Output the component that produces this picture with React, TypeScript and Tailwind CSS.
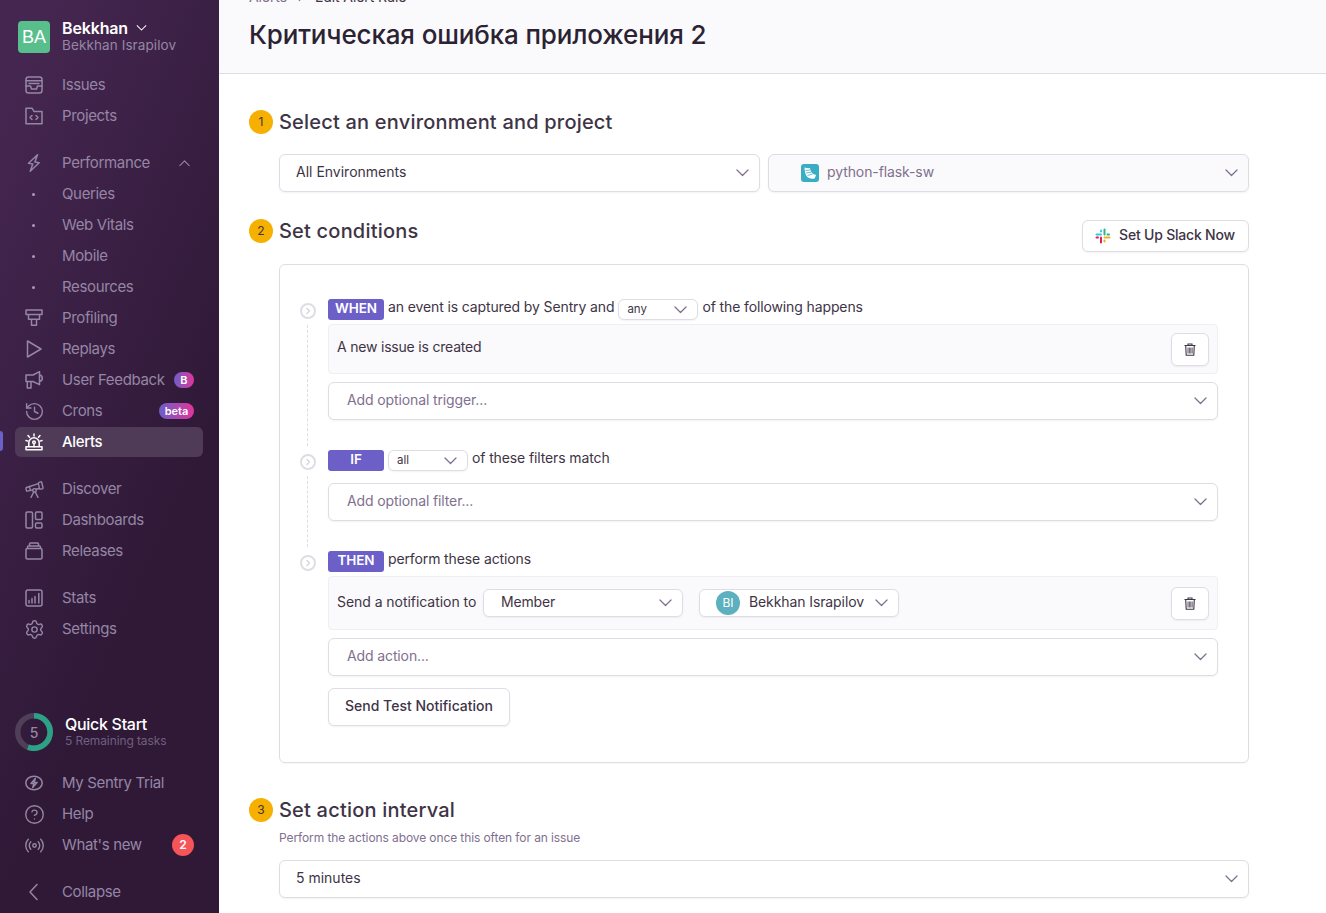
import React from "react";
import { History, Settings, CircleHelp, Radio, Telescope } from "lucide-react";

const S = ({ children }: { children: React.ReactNode }) => (
  <svg width="18" height="18" viewBox="0 0 18 18" fill="none" stroke="currentColor" strokeWidth="1.5" strokeLinecap="round" strokeLinejoin="round" className="shrink-0">
    {children}
  </svg>
);

const Chevron = ({ up, className }: { up?: boolean; className?: string }) => (
  <svg width="13" height="8" viewBox="0 0 13 8" fill="none" stroke="currentColor" strokeWidth="1.3" strokeLinecap="round" strokeLinejoin="round" className={className}>
    <path d={up ? "M1 7l5.5-5.5L12 7" : "M1 1l5.5 5.5L12 1"} />
  </svg>
);

const icons: Record<string, React.ReactNode> = {
  issues: (
    <S>
      <rect x="1" y="1" width="16" height="16" rx="2.5" />
      <path d="M1 4.8h16M1 10h4.5l1 3h5l1-3H17M4 7.4h10" />
    </S>
  ),
  projects: (
    <S>
      <path d="M1 16.800V1.200h6l2 3.200h8v12.400z" />
      <path d="M7 8.500L5 10.500l2 2M11 8.500l2 2-2 2" />
    </S>
  ),
  performance: (
    <S>
      <path d="M12.500 0.800L3.500 9.300l4.300.8-2.600 7.100 9-8.500-4.300-.8z" />
    </S>
  ),
  profiling: (
    <S>
      <path d="M1 1h16v4.600H1zM3.500 5.600h11v4.600h-11zM6.500 10.200h5v6h-5z" />
    </S>
  ),
  replays: (
    <S>
      <path d="M2.500 1L16 9 2.500 17z" />
    </S>
  ),
  feedback: (
    <S>
      <path d="M1 4h7l6.500-3.300v13L8 10.500H1zM14.500 4c2 .2 2.800 1.300 2.800 3.200s-.8 3-2.800 3.200M2.300 10.500V17H6v-6.500" />
    </S>
  ),
  alerts: (
    <S>
      <path d="M1 16.800h16v-3H1zM3.800 13.800V10a5.200 5.200 0 0 1 10.400 0v3.800" />
      <path d="M9 1v2M3 2.500l1.500 1.700M15 2.500l-1.500 1.700M1 7.500l2 .6M17 7.500l-2 .6" />
      <circle cx="9" cy="9.300" r="1.300" />
      <path d="M9 10.600v3.200" />
    </S>
  ),
  dashboards: (
    <S>
      <rect x="1" y="1" width="6.500" height="16" rx="1.200" />
      <rect x="10.500" y="1" width="6.500" height="7.500" rx="1.200" />
      <rect x="10.500" y="12" width="6.500" height="5" rx="1.200" />
    </S>
  ),
  releases: (
    <S>
      <rect x="1" y="6.500" width="16" height="10.500" rx="1.300" />
      <path d="M2.500 6.500V5a1 1 0 0 1 1-1h11a1 1 0 0 1 1 1v1.500M4.500 4V2a1 1 0 0 1 1-1h7a1 1 0 0 1 1 1v2" />
    </S>
  ),
  stats: (
    <S>
      <rect x="1" y="1" width="16" height="16" rx="2" />
      <path d="M4 14v-2.500M7 14V9.500M10 14V7.500M13.800 14V4.500" />
    </S>
  ),
  trial: (
    <S>
      <ellipse cx="9" cy="9" rx="8.200" ry="6.800" />
      <path d="M10.300 4.500L6 9.400h3l-1.300 4 4.300-5H9z" />
    </S>
  ),
  collapse: (
    <S>
      <path d="M12 1.500L5 9l7 7.500" />
    </S>
  ),
};

const lucide = (I: typeof History, size = 21) => <I size={size} strokeWidth={1.6} className="shrink-0" />;

function NavItem({ icon, label, dot, right, active }: { icon?: React.ReactNode; label: string; dot?: boolean; right?: React.ReactNode; active?: boolean }) {
  return (
    <div className={`relative mx-[15px] flex h-[30px] w-[188px] items-center rounded-md ${active ? "bg-[#4f3b58] text-white font-medium" : "text-[#9586a5]"}`}>
      {active && <div className="absolute left-[-15px] top-[4px] h-[20px] w-[3px] rounded-r-sm bg-[#6c5fc7]" />}
      <div className="ml-[10px] flex w-[18px] items-center justify-center">
        {dot ? <div className="mr-[1px] h-[3px] w-[3px] rounded-full bg-[#a99bb8]" /> : icon}
      </div>
      <span className="ml-[19px] flex-1 pb-[1px] text-[15px] leading-none tracking-[-0.35px]">{label}</span>
      {right}
    </div>
  );
}

const Grad = "bg-[linear-gradient(90deg,#6c5fc7,#e1359c)] text-white font-semibold";

function Sidebar() {
  return (
    <aside className="flex h-[913px] w-[219px] shrink-0 flex-col justify-between bg-[linear-gradient(294.17deg,#2f1937_35.57%,#452650_92.42%)] pb-[6px] pt-[21px]">
      <div>
        <div className="ml-[18px] flex h-[32px] items-center">
          <div className="flex h-[32px] w-[32px] items-center justify-center rounded-[4px] bg-[#57be8c] text-[18px] text-white" style={{ fontFamily: "'Liberation Sans', sans-serif" }}>
            BA
          </div>
          <div className="ml-[12px] flex flex-col pb-[2px]">
            <div className="flex items-center text-[16px] font-semibold leading-[17px] text-white tracking-[-0.15px]">
              Bekkhan
              <Chevron className="ml-[7px] scale-[0.8]" />
            </div>
            <div className="text-[13.5px] leading-[16px] tracking-[0.1px] text-[#9586a5]">Bekkhan Israpilov</div>
          </div>
        </div>
        <div className="mt-[17px] flex flex-col gap-px">
          <NavItem icon={icons.issues} label="Issues" />
          <NavItem icon={icons.projects} label="Projects" />
        </div>
        <div className="mt-[17px] flex flex-col gap-px">
          <NavItem icon={icons.performance} label="Performance" right={<Chevron up className="mr-[12px] scale-[0.85]" />} />
          <NavItem dot label="Queries" />
          <NavItem dot label="Web Vitals" />
          <NavItem dot label="Mobile" />
          <NavItem dot label="Resources" />
          <NavItem icon={icons.profiling} label="Profiling" />
          <NavItem icon={icons.replays} label="Replays" />
          <NavItem
            icon={icons.feedback}
            label="User Feedback"
            right={<span className={`mr-[9px] flex h-[16px] w-[20px] items-center justify-center rounded-full text-[11px] ${Grad}`}>B</span>}
          />
          <NavItem
            icon={lucide(History)}
            label="Crons"
            right={<span className={`mr-[9px] flex h-[16px] w-[35px] items-center justify-center rounded-full text-[11px] ${Grad}`}>beta</span>}
          />
          <NavItem active icon={icons.alerts} label="Alerts" />
        </div>
        <div className="mt-[17px] flex flex-col gap-px">
          <NavItem icon={lucide(Telescope)} label="Discover" />
          <NavItem icon={icons.dashboards} label="Dashboards" />
          <NavItem icon={icons.releases} label="Releases" />
        </div>
        <div className="mt-[17px] flex flex-col gap-px">
          <NavItem icon={icons.stats} label="Stats" />
          <NavItem icon={lucide(Settings)} label="Settings" />
        </div>
      </div>
      <div>
        <div className="ml-[15px] flex items-center">
          <div className="relative flex h-[38px] w-[38px] items-center justify-center text-[14px] font-medium text-[#9586a5]">
            <svg width="38" height="38" viewBox="0 0 38 38" fill="none" className="absolute inset-0">
              <circle cx="19" cy="19" r="16.250" stroke="#4f3f59" strokeWidth="5.500" />
              <path d="M19 2.750a16.250 16.250 0 1 1-6 31.400" stroke="#2ba185" strokeWidth="5.500" />
            </svg>
            5
          </div>
          <div className="ml-[12px] flex flex-col pb-[4px]">
            <div className="text-[16px] font-medium leading-[20px] text-white tracking-[-0.3px]">Quick Start</div>
            <div className="text-[12px] leading-[13px] tracking-[-0.1px] text-[#6f5f80]">5 Remaining tasks</div>
          </div>
        </div>
        <div className="mt-[17px] flex flex-col gap-px">
          <NavItem icon={icons.trial} label="My Sentry Trial" />
          <NavItem icon={lucide(CircleHelp)} label="Help" />
          <NavItem
            icon={lucide(Radio)}
            label="What's new"
            right={<span className="mr-[9px] flex h-[22px] w-[22px] items-center justify-center rounded-full bg-[#f55459] text-[12px] font-semibold text-white">2</span>}
          />
        </div>
        <div className="mt-[17px]">
          <NavItem icon={icons.collapse} label="Collapse" />
        </div>
      </div>
    </aside>
  );
}

const StepBadge = ({ n }: { n: number }) => (
  <div className="flex h-[24px] w-[24px] shrink-0 items-center justify-center rounded-full bg-[#f5b000] text-[12px] text-[#3e3446]">{n}</div>
);

const Heading = ({ n, title }: { n: number; title: string }) => (
  <div className="flex h-[24px] items-center">
    <StepBadge n={n} />
    <h2 className="ml-[6px] pb-[1px] text-[20px] font-medium leading-[24px] tracking-[0.2px] text-[#3e3446]">{title}</h2>
  </div>
);

function SelectBox({ children, className, muted }: { children: React.ReactNode; className?: string; muted?: boolean }) {
  return (
    <div className={`flex items-center justify-between rounded-md border border-[#e0dce5] shadow-[0_1px_2px_rgba(43,34,51,0.06)] ${muted ? "bg-[#faf9fb]" : "bg-white"} ${className ?? ""}`}>
      {children}
    </div>
  );
}

const BigSelect = ({ text, placeholder }: { text: string; placeholder?: boolean }) => (
  <SelectBox className={`h-[38px] w-full pr-[10px] ${placeholder ? "pl-[18px]" : "pl-[16px]"}`}>
    <span className={`pb-[3px] text-[14px] ${placeholder ? "tracking-[-0.12px] text-[#80708f]" : "text-[#3e3446]"}`}>{text}</span>
    <Chevron className="text-[#80708f]" />
  </SelectBox>
);

const Pill = ({ text }: { text: string }) => (
  <div className="flex h-[21px] w-[56px] shrink-0 items-center justify-center rounded-[3px] bg-[#6c5fc7] pb-[2px] text-[13.5px] font-semibold tracking-[-0.1px] text-white">{text}</div>
);

const TinySelect = ({ text }: { text: string }) => (
  <SelectBox className="h-[21px] w-[80px] shrink-0 pl-[8px] pr-[10px]">
    <span className="text-[11.5px] text-[#3e3446]">{text}</span>
    <Chevron className="text-[#80708f]" />
  </SelectBox>
);

function StepDot() {
  return (
    <div className="flex h-[16px] w-[16px] items-center justify-center rounded-full border-2 border-[#e0dce5] text-[#d5d0dc]">
      <svg width="6" height="8" viewBox="0 0 6 8" fill="none" stroke="currentColor" strokeWidth="1.1">
        <path d="M1.500 1l3 3-3 3" />
      </svg>
    </div>
  );
}

function Trash() {
  return (
    <div className="flex h-[33px] w-[38px] items-center justify-center rounded-md border border-[#e0dce5] bg-white shadow-[0_1px_2px_rgba(43,34,51,0.06)]">
      <svg width="12" height="13" viewBox="0 0 12 13" fill="none" stroke="#3e3446" strokeWidth="1.1">
        <path d="M0.500 2.500h11M4 2.500V1h4v1.500M1.700 2.500l.5 9.800h7.600l.5-9.800" />
        <path d="M4 4.500v6M5.400 4.500v6M6.800 4.500v6M8.200 4.500v6" strokeWidth="0.8" />
      </svg>
    </div>
  );
}

function Block({ line, children }: { line?: boolean; children: React.ReactNode }) {
  return (
    <div className="flex">
      <div className="flex w-[28px] shrink-0 flex-col pb-[4px] pt-[4px]">
        <StepDot />
        {line && <div className="ml-[7px] mt-[6px] flex-1 border-l border-dashed border-[#e0dce5]" />}
      </div>
      <div className="min-w-0 flex-1">{children}</div>
    </div>
  );
}

const Sentence = ({ children }: { children: React.ReactNode }) => <span className="pb-[6px] text-[14px] tracking-[-0.12px] text-[#3e3446]">{children}</span>;

const Panel = ({ children, h }: { children: React.ReactNode; h: string }) => (
  <div className={`flex items-start justify-between rounded-[4px] border border-[#f0eef3] bg-[#faf9fb] pl-[8px] pr-[8px] ${h}`}>{children}</div>
);

const Slack = () => (
  <svg width="16" height="16" viewBox="0 0 16 16" className="-ml-[1px]">
    <rect x="0.500" y="5.500" width="6.500" height="2" rx="1" fill="#36c5f0" />
    <rect x="5" y="1.500" width="2" height="3" rx="1" fill="#36c5f0" />
    <rect x="8.500" y="0.500" width="2" height="7" rx="1" fill="#2eb67d" />
    <rect x="11.500" y="5.500" width="3.500" height="2" rx="1" fill="#2eb67d" />
    <rect x="8.500" y="8.500" width="7" height="2" rx="1" fill="#ecb22e" />
    <rect x="8.500" y="11.500" width="2" height="3" rx="1" fill="#ecb22e" />
    <rect x="5" y="8.500" width="2" height="7" rx="1" fill="#e01e5a" />
    <rect x="0.500" y="8.500" width="3.500" height="2" rx="1" fill="#e01e5a" />
  </svg>
);

const Flask = () => (
  <svg width="18" height="18" viewBox="0 0 18 18">
    <rect width="18" height="18" rx="3" fill="#38adc4" />
    <path d="M3.500 3.500c2 .6 4 .8 5.500.6.200 2 1 4 2.500 5.400 1.200.9 2.500 1.300 3.500 1.300-.3 1.600-1 3-1.500 3.700-3 .6-6.400-.2-8-2.600C4 9.800 3.700 6.500 3.500 3.500z" fill="#fff" />
    <path d="M4.500 6.500l4.500-.5M5 9l5-.8M6.500 11.500l5-1.500" stroke="#38adc4" strokeWidth="0.8" />
  </svg>
);

export default function App() {
  return (
    <div className="flex h-[913px] w-[1326px] overflow-hidden bg-white" style={{ fontFamily: "Inter, 'Noto Sans', sans-serif" }}>
      <Sidebar />
      <main className="min-w-0 flex-1">
        <header className="h-[74px] overflow-hidden border-b border-[#e0dce5] bg-[#faf9fb] pl-[30px]">
          <div className="-mt-[14px] flex h-[20px] items-center text-[14px] tracking-[-0.1px] text-[#80708f]">
            <span>Alerts</span>
            <svg width="8" height="12" viewBox="0 0 8 12" fill="none" stroke="currentColor" strokeWidth="1.2" className="mx-[10px]">
              <path d="M2 1l4 5-4 5" />
            </svg>
            <span className="text-[#3e3446]">Edit Alert Rule</span>
          </div>
          <h1 className="mt-[13px] text-[26px] font-medium leading-[32px] tracking-[-0.14px] text-[#2b2233]">Критическая ошибка приложения 2</h1>
        </header>
        <div className="pl-[30px] pr-[77px] pt-[36px]">
          <Heading n={1} title="Select an environment and project" />
          <div className="ml-[30px] mt-[20px] grid grid-cols-2 gap-[8px]">
            <BigSelect text="All Environments" />
            <SelectBox muted className="h-[38px] pl-[32px] pr-[10px]">
              <span className="flex items-center gap-[8px] text-[14px] tracking-[-0.1px] text-[#80708f]">
                <Flask />
                <span className="pb-[4px]">python-flask-sw</span>
              </span>
              <Chevron className="text-[#80708f]" />
            </SelectBox>
          </div>

          <div className="mt-[27px] flex items-start justify-between">
            <Heading n={2} title="Set conditions" />
            <SelectBox className="mt-[1px] h-[32px] w-[167px] justify-center gap-[8px]">
              <Slack />
              <span className="pb-[3px] text-[14px] font-medium tracking-[-0.2px] text-[#3e3446]">Set Up Slack Now</span>
            </SelectBox>
          </div>

          <section className="ml-[30px] mt-[12px] h-[499px] rounded-md border border-[#e0dce5] pl-[20px] pr-[30px] pt-[34px] shadow-[0_1px_2px_rgba(43,34,51,0.04)]">
            <Block line>
              <div className="pb-[30px]">
                <div className="flex h-[21px] items-center gap-[4px]">
                  <Pill text="WHEN" />
                  <Sentence>an event is captured by Sentry and</Sentence>
                  <TinySelect text="any" />
                  <Sentence>of the following happens</Sentence>
                </div>
                <div className="mt-[4px]">
                  <Panel h="h-[50px]">
                    <span className="mt-[11px] text-[14px] tracking-[-0.2px] text-[#3e3446]">A new issue is created</span>
                    <div className="mt-[8px]">
                      <Trash />
                    </div>
                  </Panel>
                </div>
                <div className="mt-[8px]">
                  <BigSelect text="Add optional trigger..." placeholder />
                </div>
              </div>
            </Block>
            <Block line>
              <div className="pb-[30px]">
                <div className="flex h-[21px] items-center gap-[4px]">
                  <Pill text="IF" />
                  <TinySelect text="all" />
                  <Sentence>of these filters match</Sentence>
                </div>
                <div className="mt-[12px]">
                  <BigSelect text="Add optional filter..." placeholder />
                </div>
              </div>
            </Block>
            <Block>
              <div className="flex h-[21px] items-center gap-[4px]">
                <Pill text="THEN" />
                <Sentence>perform these actions</Sentence>
              </div>
              <div className="mt-[4px]">
                <Panel h="h-[54px]">
                  <div className="mt-[12px] flex items-center">
                    <span className="w-[146px] pb-[4px] text-[14px] tracking-[-0.05px] text-[#3e3446]">Send a notification to</span>
                    <SelectBox className="h-[28px] w-[200px] pl-[17px] pr-[10px]">
                      <span className="pb-[3px] text-[14px] tracking-[-0.15px] text-[#3e3446]">Member</span>
                      <Chevron className="text-[#80708f]" />
                    </SelectBox>
                    <SelectBox className="ml-[16px] h-[28px] w-[200px] pl-[16px] pr-[10px]">
                      <span className="flex items-center gap-[9px] text-[14px] tracking-[-0.1px] text-[#3e3446]">
                        <span className="flex h-[24px] w-[24px] items-center justify-center rounded-full bg-[#5cb0bf] text-[12px] text-white">BI</span>
                        <span className="pb-[3px]">Bekkhan Israpilov</span>
                      </span>
                      <Chevron className="text-[#80708f]" />
                    </SelectBox>
                  </div>
                  <div className="mt-[10px]">
                    <Trash />
                  </div>
                </Panel>
              </div>
              <div className="mt-[8px]">
                <BigSelect text="Add action..." placeholder />
              </div>
              <SelectBox className="mt-[12px] h-[38px] w-[182px] justify-center">
                <span className="pb-[3px] text-[14px] font-medium text-[#3e3446]">Send Test Notification</span>
              </SelectBox>
            </Block>
          </section>

          <div className="mt-[35px]">
            <Heading n={3} title="Set action interval" />
          </div>
          <p className="ml-[30px] mt-[8px] text-[12px] leading-[16px] tracking-[-0.1px] text-[#80708f]">Perform the actions above once this often for an issue</p>
          <div className="ml-[30px] mt-[14px]">
            <BigSelect text="5 minutes" />
          </div>
        </div>
      </main>
    </div>
  );
}
